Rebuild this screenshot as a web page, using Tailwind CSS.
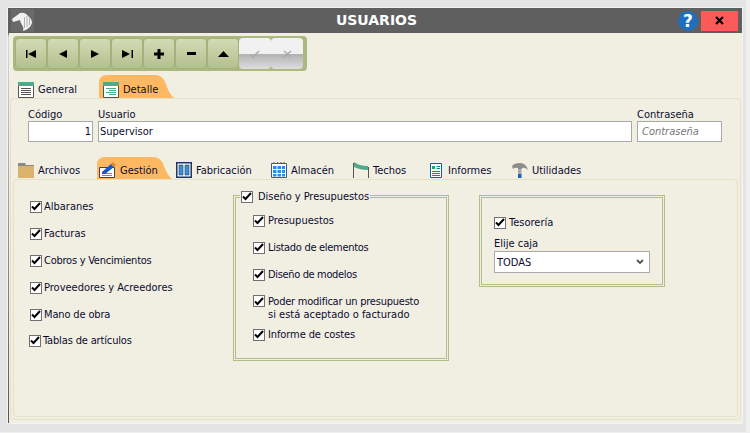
<!DOCTYPE html>
<html lang="es">
<head>
<meta charset="UTF-8">
<title>Usuarios</title>
<script src="https://cdn.jsdelivr.net/npm/@tailwindcss/browser@4"></script>
</head>
<body class="bg-[#e4e4e4] font-['DejaVu_Sans_Condensed','DejaVu_Sans',sans-serif] text-[11px] leading-[13px] text-[#0c0c30] overflow-hidden">
<div class="w-[750px] h-[433px] pt-[8px] pl-[8px] pr-[4px] pb-[9px] border-r-[4px] border-b border-[#f0f0f0]">
  <div class="h-full pl-[1px] bg-gradient-to-b from-[#5f5f5f] from-[6%] via-[#d8d8d8] via-[7%] to-[#555] ring-1 ring-[#f2f2f2]">
  <div class="h-full flex flex-col bg-[#f1efe2]">

    <!-- title bar -->
    <div class="h-[25px] shrink-0 bg-[#5f5f5f] flex items-center">
      <div class="w-[23px] h-[23px] ml-[2px] bg-[#6a6a6a] flex items-center justify-center">
        <svg width="23" height="23" viewBox="0 0 23 23"><path d="M1 10L9 4Q14 3 17 7Q21 10 21 14Q19 20 12 22Q13 18 11 16Q9 13 9 11L2 13Z" fill="#f2f2f2"/><path d="M13.500 8v11M16 7v11M18.500 9v7" stroke="#b0b0b0"/></svg>
      </div>
      <div class="flex-1 text-center text-white font-bold font-['DejaVu_Sans',sans-serif] text-[14px] pl-[41px]">USUARIOS</div>
      <div class="w-[20px] h-[20px] rounded-full bg-[#1f6fc0] text-white font-bold font-['DejaVu_Sans',sans-serif] text-[17px] leading-[20px] text-center mr-[3px]">?</div>
      <div class="w-[37px] h-[20px] bg-[#ff5a5a] flex items-center justify-center mr-[4px]">
        <svg width="9" height="9" viewBox="0 0 9 9"><path d="M1 1l7 7M8 1l-7 7" stroke="#000" stroke-width="2.2"/></svg>
      </div>
    </div>

    <!-- toolbar -->
    <div class="flex w-[294px] h-[35px] ml-[4px] mt-[3px] p-[2px] bg-[#a9b97f] rounded-[4px] shrink-0">
      <div class="w-[32px] h-[31px] rounded-[4px] border border-[#a2b27a] bg-gradient-to-b from-[#d2dbb4] to-[#b3c08f] flex items-center justify-center">
        <svg width="11" height="8" viewBox="0 0 11 8"><path d="M0 0h1.500v8H0zM10 0v8L2 4z"/></svg>
      </div>
      <div class="w-[32px] h-[31px] rounded-[4px] border border-[#a2b27a] bg-gradient-to-b from-[#d2dbb4] to-[#b3c08f] flex items-center justify-center">
        <svg width="8" height="8" viewBox="0 0 8 8"><path d="M8 0v8L0 4z"/></svg>
      </div>
      <div class="w-[32px] h-[31px] rounded-[4px] border border-[#a2b27a] bg-gradient-to-b from-[#d2dbb4] to-[#b3c08f] flex items-center justify-center">
        <svg width="8" height="8" viewBox="0 0 8 8"><path d="M0 0v8L8 4z"/></svg>
      </div>
      <div class="w-[32px] h-[31px] rounded-[4px] border border-[#a2b27a] bg-gradient-to-b from-[#d2dbb4] to-[#b3c08f] flex items-center justify-center">
        <svg width="11" height="8" viewBox="0 0 11 8"><path d="M0 0v8L8 4zM9.500 0H11v8H9.500z"/></svg>
      </div>
      <div class="w-[32px] h-[31px] rounded-[4px] border border-[#a2b27a] bg-gradient-to-b from-[#d2dbb4] to-[#b3c08f] flex items-center justify-center">
        <svg width="10" height="10" viewBox="0 0 10 10"><path d="M3.500 0h3v3.500H10v3H6.500V10h-3V6.500H0v-3h3.500z"/></svg>
      </div>
      <div class="w-[32px] h-[31px] rounded-[4px] border border-[#a2b27a] bg-gradient-to-b from-[#d2dbb4] to-[#b3c08f] flex items-center justify-center">
        <svg width="9" height="3" viewBox="0 0 9 3"><path d="M0 0h9v3H0z"/></svg>
      </div>
      <div class="w-[32px] h-[31px] rounded-[4px] border border-[#a2b27a] bg-gradient-to-b from-[#d2dbb4] to-[#b3c08f] flex items-center justify-center">
        <svg width="11" height="6" viewBox="0 0 11 6"><path d="M5.500 0L11 6H0z"/></svg>
      </div>
      <div class="w-[32px] h-[31px] rounded-[4px] bg-gradient-to-b from-[#f1f1f1] from-50% via-[#b0b0b0] via-50% to-[#dedede] flex items-center justify-center">
        <svg width="10" height="8" viewBox="0 0 10 8"><path d="M1 5l2 2 6-6" fill="none" stroke="#aaa" stroke-width="1.500"/></svg>
      </div>
      <div class="w-[32px] h-[31px] rounded-[4px] bg-gradient-to-b from-[#f1f1f1] from-50% via-[#b0b0b0] via-50% to-[#dedede] flex items-center justify-center">
        <svg width="9" height="8" viewBox="0 0 9 8"><path d="M1 1l7 6M8 1L1 7" stroke="#aaa" stroke-width="1.500"/></svg>
      </div>
    </div>

    <!-- main tabs -->
    <div class="flex h-[23px] mt-[4px] pl-[9px] shrink-0 items-end">
      <div class="w-[81px] h-[23px] flex items-center gap-[4px] pt-[6px]">
        <svg width="16" height="16" viewBox="0 0 16 16"><path d="M.5 .5h15v15H.5z" fill="#fff" stroke="#555"/><path d="M0 0h16v4H0z" fill="#4fa98a"/><path d="M3 6.500h10M3 8.500h10M3 10.500h10M3 12.500h10" stroke="#555"/></svg>
        <span>General</span>
      </div>
      <div class="relative w-[75px] h-[23px] flex items-center gap-[4px] pl-[4px] pt-[6px]">
        <svg class="absolute inset-0" width="75" height="23" viewBox="0 0 75 23"><path d="M0 23V8Q0 0 8 0H56Q64 0 67 9Q70 19 75 23Z" fill="#ffb862"/></svg>
        <svg class="relative" width="16" height="16" viewBox="0 0 16 16"><path d="M.5 .5h15v15H.5z" fill="#fff" stroke="#555"/><path d="M0 0h16v4H0z" fill="#4fa98a"/><path d="M3 6.500h10M6 8.500h7M3 10.500h10M6 12.500h7" stroke="#4fa98a"/></svg>
        <span class="relative">Detalle</span>
      </div>
    </div>

    <!-- main panel -->
    <div class="flex-1 flex flex-col mx-[1px] mb-[3px] border border-[#e3e2c6] rounded-[4px]">
      <div class="flex gap-[5px] pl-[17px] pt-[9px] shrink-0">
        <label class="flex flex-col"><span class="h-[13px]">Código</span>
          <span class="block w-[65px] h-[21px] bg-white border border-[#a9a9a9] text-right pr-[1px] leading-[19px]">1</span></label>
        <label class="flex flex-col"><span class="h-[13px]">Usuario</span>
          <span class="block w-[534px] h-[21px] bg-white border border-[#a9a9a9] pl-[1px] leading-[19px]">Supervisor</span></label>
        <label class="flex flex-col"><span class="h-[13px]">Contraseña</span>
          <span class="block w-[85px] h-[21px] bg-white border border-[#a9a9a9] pl-[4px] leading-[19px] italic text-[#777]">Contraseña</span></label>
      </div>

      <!-- section tabs -->
      <div class="flex h-[22px] mt-[15px] pl-[7px] shrink-0 items-stretch">
        <div class="w-[79px] flex items-center gap-[4px] pt-[4px]">
          <svg width="16" height="15" viewBox="0 0 16 15"><path d="M0 0h7l1 2h8v2H0z" fill="#8a8a8a"/><path d="M0 3h16v12H0z" fill="#dcb36c"/></svg>
          <span>Archivos</span>
        </div>
        <div class="relative w-[75px] flex items-center gap-[4px] pl-[2px] pt-[4px]">
          <svg class="absolute inset-0" width="75" height="22" viewBox="0 0 75 22"><path d="M0 22V8Q0 0 8 0H56Q64 0 67 9Q70 18 75 22Z" fill="#ffb862"/></svg>
          <svg class="relative" width="17" height="16" viewBox="0 0 17 16"><path d="M.5 5.500h15v10H.5z" fill="#fff" stroke="#444"/><path d="M3 11.500h10M3 13.500h10" stroke="#3ca0a0"/><path d="M3 10L12 2l3 3-9 7H3z" fill="#1557c8"/><path d="M12 2l2-2 3 3-2 2z" fill="#e8862a"/></svg>
          <span class="relative">Gestión</span>
        </div>
        <div class="w-[99px] pl-[4px] flex items-center gap-[4px] pt-[4px]">
          <svg width="16" height="16" viewBox="0 0 16 16"><path d="M.75 .75h14.500v14.500H.75z" fill="#fff" stroke="#1f3564" stroke-width="1.500"/><path d="M3 3h4v10H3zM9 3h4v10H9z" fill="#3f8fd8" stroke="#1f3564" stroke-width=".6"/></svg>
          <span>Fabricación</span>
        </div>
        <div class="w-[82px] flex items-center gap-[4px] pt-[4px]">
          <svg width="16" height="16" viewBox="0 0 16 16"><path d="M.5 1.500h15v14H.5z" fill="#fff" stroke="#556"/><path d="M3 0v2M6.500 0v2M10 0v2M13 0v2" stroke="#556"/><path d="M2 4h3.500v3H2zM6.500 4H10v3H6.500zM11 4h3v3h-3zM2 8h3.500v3H2zM6.500 8H10v3H6.500zM11 8h3v3h-3zM2 12h3.500v2.500H2zM6.500 12H10v2.500H6.500zM11 12h3v2.500h-3z" fill="#1e90ef"/></svg>
          <span>Almacén</span>
        </div>
        <div class="w-[77px] flex items-center gap-[4px] pt-[4px]">
          <svg width="16" height="16" viewBox="0 0 16 16"><path d="M.5 1v15M15.500 5v11" stroke="#555"/><path d="M1 0Q6 4 15 4v4Q7 8 1 5z" fill="#4fa98a"/></svg>
          <span>Techos</span>
        </div>
        <div class="w-[82px] flex items-center gap-[6px] pt-[4px]">
          <svg width="12" height="15" viewBox="0 0 12 15"><path d="M.5 .5h11v14H.5z" fill="#fff" stroke="#10609a"/><path d="M2 3h3v3H2z" fill="#3a9a60"/><path d="M6.500 3.500H10M6.500 5.500H10M2 8.500h8M2 10.500h8M2 12.500h8" stroke="#1080a0"/></svg>
          <span>Informes</span>
        </div>
        <div class="flex items-center gap-[4px] pt-[4px]">
          <svg width="16" height="16" viewBox="0 0 16 16"><path d="M0 4Q2 1 8 1Q14 1 16 8Q13 5 10 6V7H6V6Q3 5 1 7Z" fill="#8c8c8c"/><path d="M6 7h3.500v5H6z" fill="#a8a8a8"/><path d="M6 12h3.500v4H6z" fill="#1f5fc0"/></svg>
          <span>Utilidades</span>
        </div>
      </div>

      <!-- section panel -->
      <div class="flex-1 flex mx-[2px] mb-[2px] border border-[#e3e2c6] rounded-[4px] pl-[16px]">
        <div class="w-[203px] pt-[20px] flex flex-col gap-[14px]">
          <div class="flex items-center gap-[2px] h-[13px]"><span class="w-[12px] h-[12px] bg-white border border-[#707070] flex items-center justify-center"><svg width="10" height="9" viewBox="0 0 10 9"><path d="M1 4.500l2.500 2.500L9 1" fill="none" stroke="#000" stroke-width="2"/></svg></span><span>Albaranes</span></div>
          <div class="flex items-center gap-[2px] h-[13px]"><span class="w-[12px] h-[12px] bg-white border border-[#707070] flex items-center justify-center"><svg width="10" height="9" viewBox="0 0 10 9"><path d="M1 4.500l2.500 2.500L9 1" fill="none" stroke="#000" stroke-width="2"/></svg></span><span>Facturas</span></div>
          <div class="flex items-center gap-[2px] h-[13px]"><span class="w-[12px] h-[12px] bg-white border border-[#707070] flex items-center justify-center"><svg width="10" height="9" viewBox="0 0 10 9"><path d="M1 4.500l2.500 2.500L9 1" fill="none" stroke="#000" stroke-width="2"/></svg></span><span class="tracking-[-0.25px]">Cobros y Vencimientos</span></div>
          <div class="flex items-center gap-[2px] h-[13px]"><span class="w-[12px] h-[12px] bg-white border border-[#707070] flex items-center justify-center"><svg width="10" height="9" viewBox="0 0 10 9"><path d="M1 4.500l2.500 2.500L9 1" fill="none" stroke="#000" stroke-width="2"/></svg></span><span>Proveedores y Acreedores</span></div>
          <div class="flex items-center gap-[2px] h-[13px]"><span class="w-[12px] h-[12px] bg-white border border-[#707070] flex items-center justify-center"><svg width="10" height="9" viewBox="0 0 10 9"><path d="M1 4.500l2.500 2.500L9 1" fill="none" stroke="#000" stroke-width="2"/></svg></span><span class="tracking-[-0.15px]">Mano de obra</span></div>
          <div class="flex items-center gap-[2px] h-[13px] -ml-[1px] -mt-[1px]"><span class="w-[12px] h-[12px] bg-white border border-[#707070] flex items-center justify-center"><svg width="10" height="9" viewBox="0 0 10 9"><path d="M1 4.500l2.500 2.500L9 1" fill="none" stroke="#000" stroke-width="2"/></svg></span><span class="tracking-[-0.15px]">Tablas de artículos</span></div>
        </div>

        <fieldset class="w-[216px] h-[171px] mt-[10px] border-[3px] border-double border-[#b0bf8a] pl-[17px] flex flex-col">
          <legend class="-ml-[13px] px-[1px]"><span class="flex items-center gap-[5px] h-[13px]"><span class="w-[12px] h-[12px] bg-white border border-[#707070] flex items-center justify-center"><svg width="10" height="9" viewBox="0 0 10 9"><path d="M1 4.500l2.500 2.500L9 1" fill="none" stroke="#000" stroke-width="2"/></svg></span><span class="tracking-[-0.05px]">Diseño y Presupuestos</span></span></legend>
          <div class="flex flex-col pt-[11px]">
            <div class="flex items-center gap-[3px] h-[13px] mb-[14px]"><span class="w-[12px] h-[12px] bg-white border border-[#707070] flex items-center justify-center"><svg width="10" height="9" viewBox="0 0 10 9"><path d="M1 4.500l2.500 2.500L9 1" fill="none" stroke="#000" stroke-width="2"/></svg></span><span>Presupuestos</span></div>
            <div class="flex items-center gap-[3px] h-[13px] mb-[14px]"><span class="w-[12px] h-[12px] bg-white border border-[#707070] flex items-center justify-center"><svg width="10" height="9" viewBox="0 0 10 9"><path d="M1 4.500l2.500 2.500L9 1" fill="none" stroke="#000" stroke-width="2"/></svg></span><span class="tracking-[-0.3px]">Listado de elementos</span></div>
            <div class="flex items-center gap-[3px] h-[13px] mb-[14px]"><span class="w-[12px] h-[12px] bg-white border border-[#707070] flex items-center justify-center"><svg width="10" height="9" viewBox="0 0 10 9"><path d="M1 4.500l2.500 2.500L9 1" fill="none" stroke="#000" stroke-width="2"/></svg></span><span class="tracking-[-0.35px]">Diseño de modelos</span></div>
            <div class="flex items-start gap-[3px] mb-[7px]"><span class="w-[12px] h-[12px] bg-white border border-[#707070] flex items-center justify-center"><svg width="10" height="9" viewBox="0 0 10 9"><path d="M1 4.500l2.500 2.500L9 1" fill="none" stroke="#000" stroke-width="2"/></svg></span><span><span class="tracking-[-0.23px]">Poder modificar un presupuesto</span><br>si está aceptado o facturado</span></div>
            <div class="flex items-center gap-[3px] h-[13px]"><span class="w-[12px] h-[12px] bg-white border border-[#707070] flex items-center justify-center"><svg width="10" height="9" viewBox="0 0 10 9"><path d="M1 4.500l2.500 2.500L9 1" fill="none" stroke="#000" stroke-width="2"/></svg></span><span class="tracking-[-0.1px]">Informe de costes</span></div>
          </div>
        </fieldset>

        <div class="w-[186px] h-[92px] mt-[15px] ml-[30px] border-[3px] border-double border-[#b0bf8a] pl-[12px] pt-[18px]">
          <div class="flex items-center gap-[3px] h-[13px]"><span class="w-[12px] h-[12px] bg-white border border-[#707070] flex items-center justify-center"><svg width="10" height="9" viewBox="0 0 10 9"><path d="M1 4.500l2.500 2.500L9 1" fill="none" stroke="#000" stroke-width="2"/></svg></span><span>Tesorería</span></div>
          <div class="mt-[8px] h-[13px]">Elije caja</div>
          <div class="mt-[1px] w-[156px] h-[22px] bg-white border border-[#a9a9a9] flex items-center justify-between pl-[2px] pr-[5px]">
            <span>TODAS</span>
            <svg width="8" height="6" viewBox="0 0 8 6"><path d="M1 1l3 3 3-3" fill="none" stroke="#555" stroke-width="1.800"/></svg>
          </div>
        </div>
      </div>
    </div>
  </div>
  </div>
</div>
</body>
</html>
